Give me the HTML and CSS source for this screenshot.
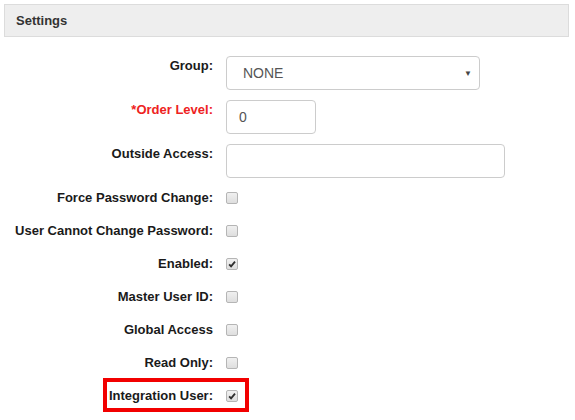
FILE: index.html
```html
<!DOCTYPE html>
<html>
<head>
<meta charset="utf-8">
<link rel="stylesheet" href="styles.css">
</head>
<body>
<div class="panel">
  <div class="panel-heading">Settings</div>
  <div class="form">
    <div class="row field">
      <label class="lbl">Group:</label>
      <div class="select"><span>NONE</span><span class="caret">&#9660;</span></div>
    </div>
    <div class="row field">
      <label class="lbl req">*Order Level:</label>
      <div class="input short"><span>0</span></div>
    </div>
    <div class="row field last">
      <label class="lbl">Outside Access:</label>
      <div class="input wide"></div>
    </div>
    <div class="checks">
      <div class="row check"><label class="lbl">Force Password Change:</label><span class="cb"></span></div>
      <div class="row check"><label class="lbl">User Cannot Change Password:</label><span class="cb"></span></div>
      <div class="row check"><label class="lbl">Enabled:</label><span class="cb on"><svg viewBox="0 0 12 12"><path d="M2.6 6.4 L4.9 8.8 L9.6 3.2" /></svg></span></div>
      <div class="row check"><label class="lbl">Master User ID:</label><span class="cb"></span></div>
      <div class="row check"><label class="lbl">Global Access</label><span class="cb"></span></div>
      <div class="row check"><label class="lbl">Read Only:</label><span class="cb"></span></div>
      <div class="row check hl"><label class="lbl">Integration User:</label><span class="cb on"><svg viewBox="0 0 12 12"><path d="M2.6 6.4 L4.9 8.8 L9.6 3.2" /></svg></span><span class="highlight"></span></div>
    </div>
  </div>
</div>
</body>
</html>
```

FILE: styles.css
```css
html, body {
  margin: 0;
  padding: 0;
  background: #fff;
}
body {
  font-family: "Liberation Sans", Arial, sans-serif;
  color: #222;
  font-size: 13px;
}
.panel {
  padding: 4px 6px 0 4px;
}
.panel-heading {
  height: 33px;
  box-sizing: border-box;
  border: 1px solid #dcdcdc;
  background: #eeeeee;
  font-weight: bold;
  font-size: 13px;
  color: #333;
  padding: 8px 0 0 11px;
}
.form {
  padding-top: 19px;
}
.row {
  display: flex;
  position: relative;
}
.field {
  margin-bottom: 10px;
  align-items: flex-start;
}
.field.last {
  margin-bottom: 0;
}
.lbl {
  width: 209px;
  flex: 0 0 209px;
  text-align: right;
  font-weight: bold;
  font-size: 13px;
  color: #1a1a1a;
  margin-right: 13px;
}
.field .lbl {
  padding-top: 2px;
}
.lbl.req {
  color: #ee2222;
}
.select, .input {
  box-sizing: border-box;
  height: 34px;
  border: 1px solid #cccccc;
  border-radius: 4px;
  background: #fff;
  display: flex;
  align-items: center;
  color: #555;
  font-size: 14px;
}
.select {
  width: 254px;
  padding: 0 7px 0 16px;
  justify-content: space-between;
}
.caret {
  font-size: 8px;
  color: #444;
}
.input.short {
  width: 90px;
  padding-left: 12px;
}
.input.wide {
  width: 279px;
}
.checks {
  padding-top: 3px;
}
.check {
  height: 33px;
  align-items: center;
}
.cb {
  box-sizing: border-box;
  width: 12px;
  height: 12px;
  margin-left: 0;
  margin-top: 1px;
  border: 1px solid #b5b5b5;
  border-radius: 2px;
  background: linear-gradient(#f0f0f0, #dedede);
  display: flex;
  align-items: center;
  justify-content: center;
}
.cb svg {
  width: 10px;
  height: 10px;
}
.cb svg path {
  fill: none;
  stroke: #2e2e2e;
  stroke-width: 2.2;
}
.highlight {
  position: absolute;
  left: 99px;
  top: -1px;
  width: 146px;
  height: 34px;
  box-sizing: border-box;
  border: 4px solid #f20000;
}
```
